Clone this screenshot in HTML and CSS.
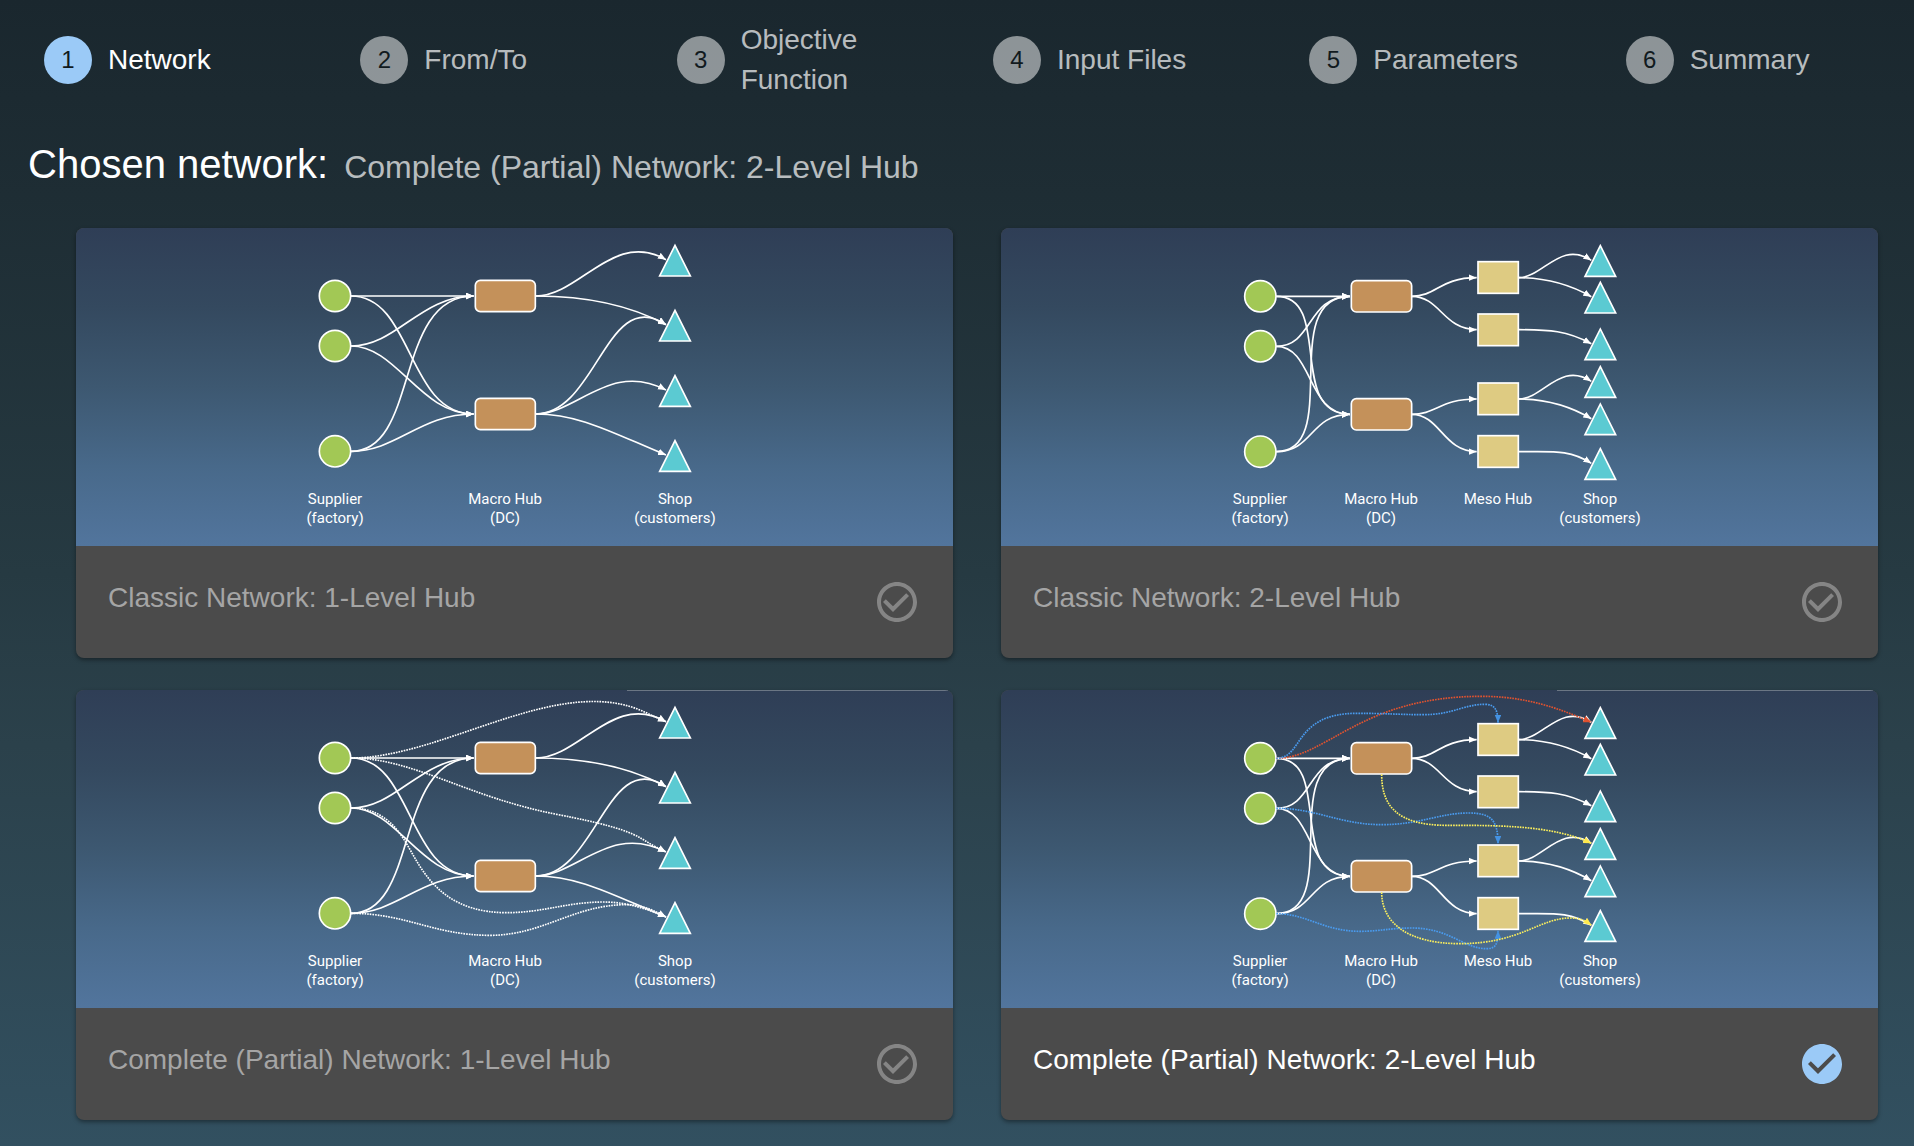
FILE: index.html
```html
<!DOCTYPE html>
<html lang="en">
<head>
<meta charset="utf-8">
<meta name="viewport" content="width=device-width, initial-scale=1">
<title>Network setup</title>
<link rel="stylesheet" href="styles.css">
</head>
<body>
<nav aria-label="Setup steps">
  <ol class="stepper">
    <li class="step step--active" aria-current="step"><span class="step__number">1</span><span class="step__label">Network</span></li>
    <li class="step"><span class="step__number">2</span><span class="step__label">From/To</span></li>
    <li class="step"><span class="step__number">3</span><span class="step__label">Objective Function</span></li>
    <li class="step"><span class="step__number">4</span><span class="step__label">Input Files</span></li>
    <li class="step"><span class="step__number">5</span><span class="step__label">Parameters</span></li>
    <li class="step"><span class="step__number">6</span><span class="step__label">Summary</span></li>
  </ol>
</nav>

<main>
  <h1 class="heading"><span>Chosen network:</span> <span class="heading__value">Complete (Partial) Network: 2-Level Hub</span></h1>

  <div class="networks" role="radiogroup" aria-label="Network">
    <label class="card">
      <svg class="diagram" viewBox="0 0 877 318" aria-hidden="true">
        <defs>
          <marker id="arrow" class="arrow" markerUnits="userSpaceOnUse" markerWidth="26" markerHeight="22" refX="24" refY="10" orient="auto"><path d="M0 0L24 10L0 20Z"/></marker>
          <marker id="arrow-red" class="arrow arrow--red" markerUnits="userSpaceOnUse" markerWidth="26" markerHeight="22" refX="24" refY="10" orient="auto"><path d="M0 0L24 10L0 20Z"/></marker>
          <marker id="arrow-blue" class="arrow arrow--blue" markerUnits="userSpaceOnUse" markerWidth="26" markerHeight="22" refX="24" refY="10" orient="auto"><path d="M0 0L24 10L0 20Z"/></marker>
          <marker id="arrow-yellow" class="arrow arrow--yellow" markerUnits="userSpaceOnUse" markerWidth="26" markerHeight="22" refX="24" refY="10" orient="auto"><path d="M0 0L24 10L0 20Z"/></marker>
          <path id="shop" class="shop" d="M0 0L46 92H-46Z"/>
          <g id="one-level">
            <g class="link">
              <path d="M213 228H581"/>
              <path d="M213 228C400 228 380 582 581 582"/>
              <path d="M213 378C350 378 420 228 581 228"/>
              <path d="M213 378C350 378 420 582 581 582"/>
              <path d="M213 694C420 694 340 228 581 228"/>
              <path d="M213 694C350 694 420 582 581 582"/>
              <path d="M767 228C900 228 1000 28 1158 119"/>
              <path d="M767 228C900 228 1040 250 1158 314"/>
              <path d="M767 582C950 582 980 194 1158 314"/>
              <path d="M767 582C890 582 990 422 1158 510"/>
              <path d="M767 582C900 582 1000 640 1158 705"/>
            </g>
            <g class="supplier"><circle cx="165" cy="228" r="47"/><circle cx="165" cy="378" r="47"/><circle cx="165" cy="694" r="47"/></g>
            <g class="macro"><rect x="586" y="181" width="180" height="94" rx="15"/><rect x="586" y="535" width="180" height="94" rx="15"/></g>
            <use href="#shop" x="1185" y="76"/><use href="#shop" x="1185" y="271"/><use href="#shop" x="1185" y="467"/><use href="#shop" x="1185" y="662"/>
          </g>
          <g id="two-level">
            <g class="link">
              <path d="M229 229H450"/>
              <path d="M229 229C400 229 260 583 450 583"/>
              <path d="M229 379C340 379 320 229 450 229"/>
              <path d="M229 379C340 379 320 583 450 583"/>
              <path d="M229 695C430 695 230 229 450 229"/>
              <path d="M229 695C340 695 330 583 450 583"/>
              <path d="M635 229C710 229 720 173 830 173"/>
              <path d="M635 229C720 229 730 329 830 329"/>
              <path d="M635 583C710 583 720 537 830 537"/>
              <path d="M635 583C720 583 730 695 830 695"/>
              <path d="M955 173C1030 173 1080 60 1174 121"/>
              <path d="M955 173C1030 173 1100 188 1174 230"/>
              <path d="M955 329C1050 329 1100 332 1174 371"/>
              <path d="M955 537C1030 537 1080 423 1174 484"/>
              <path d="M955 537C1030 537 1100 552 1174 596"/>
              <path d="M955 695C1060 695 1110 688 1174 730"/>
            </g>
            <g class="supplier"><circle cx="181" cy="229" r="47"/><circle cx="181" cy="379" r="47"/><circle cx="181" cy="695" r="47"/></g>
            <g class="macro"><rect x="454" y="182" width="181" height="94" rx="15"/><rect x="454" y="536" width="181" height="94" rx="15"/></g>
            <g class="meso"><rect x="834" y="125" width="121" height="95"/><rect x="834" y="282" width="121" height="95"/><rect x="834" y="489" width="121" height="95"/><rect x="834" y="647" width="121" height="95"/></g>
            <use href="#shop" x="1201" y="77"/><use href="#shop" x="1201" y="187"/><use href="#shop" x="1201" y="327"/><use href="#shop" x="1201" y="440"/><use href="#shop" x="1201" y="552"/><use href="#shop" x="1201" y="686"/>
          </g>
        </defs>
        <g transform="translate(204 -8) scale(.33333)"><use href="#one-level"/></g>
        <g class="caption">
          <text x="259" y="276">Supplier</text><text x="259" y="295">(factory)</text>
          <text x="429" y="276">Macro Hub</text><text x="429" y="295">(DC)</text>
          <text x="599" y="276">Shop</text><text x="599" y="295">(customers)</text>
        </g>
      </svg>
      <span class="card__bar">
        <span class="card__title">Classic Network: 1-Level Hub</span>
        <span class="tick">
          <input class="tick__input" type="radio" name="network">
          <svg class="tick__icon tick__icon--off" viewBox="0 0 24 24" aria-hidden="true"><path d="M12 2C6.480 2 2 6.480 2 12s4.480 10 10 10 10-4.480 10-10S17.520 2 12 2zm0 18c-4.410 0-8-3.590-8-8s3.590-8 8-8 8 3.590 8 8-3.590 8-8 8zM16.590 7.580 10 14.170l-3.590-3.580L5 12l5 5 8-8z"/></svg>
          <svg class="tick__icon tick__icon--on" viewBox="0 0 24 24" aria-hidden="true"><path d="M12 2C6.480 2 2 6.480 2 12s4.480 10 10 10 10-4.480 10-10S17.520 2 12 2zm-2 15-5-5 1.410-1.410L10 14.170l7.590-7.590L19 8l-9 9z"/></svg>
        </span>
      </span>
    </label>

    <label class="card">
      <svg class="diagram" viewBox="0 0 877 318" aria-hidden="true">
        <g transform="translate(199 -8) scale(.33333)"><use href="#two-level"/></g>
        <g class="caption">
          <text x="259" y="276">Supplier</text><text x="259" y="295">(factory)</text>
          <text x="380" y="276">Macro Hub</text><text x="380" y="295">(DC)</text>
          <text x="497" y="276">Meso Hub</text>
          <text x="599" y="276">Shop</text><text x="599" y="295">(customers)</text>
        </g>
      </svg>
      <span class="card__bar">
        <span class="card__title">Classic Network: 2-Level Hub</span>
        <span class="tick">
          <input class="tick__input" type="radio" name="network">
          <svg class="tick__icon tick__icon--off" viewBox="0 0 24 24" aria-hidden="true"><path d="M12 2C6.480 2 2 6.480 2 12s4.480 10 10 10 10-4.480 10-10S17.520 2 12 2zm0 18c-4.410 0-8-3.590-8-8s3.590-8 8-8 8 3.590 8 8-3.590 8-8 8zM16.590 7.580 10 14.170l-3.590-3.580L5 12l5 5 8-8z"/></svg>
          <svg class="tick__icon tick__icon--on" viewBox="0 0 24 24" aria-hidden="true"><path d="M12 2C6.480 2 2 6.480 2 12s4.480 10 10 10 10-4.480 10-10S17.520 2 12 2zm-2 15-5-5 1.410-1.410L10 14.170l7.590-7.590L19 8l-9 9z"/></svg>
        </span>
      </span>
    </label>

    <label class="card">
      <svg class="diagram" viewBox="0 0 877 318" aria-hidden="true">
        <path class="edge" d="M551 .5H872"/>
        <g transform="translate(204 -8) scale(.33333)">
          <use href="#one-level"/>
          <g class="link link--dotted">
            <path d="M213 228C500 228 850-40 1110 98L1158 119"/>
            <path d="M213 228C400 228 560 345 830 397S1060 466 1158 510"/>
            <path d="M213 378C330 378 370 470 400 520C450 610 520 692 680 692C790 692 860 660 970 660C1040 660 1100 680 1158 705"/>
            <path d="M213 694C380 694 460 760 630 760C790 760 880 668 1040 668C1090 668 1130 690 1158 705"/>
          </g>
        </g>
        <g class="caption">
          <text x="259" y="276">Supplier</text><text x="259" y="295">(factory)</text>
          <text x="429" y="276">Macro Hub</text><text x="429" y="295">(DC)</text>
          <text x="599" y="276">Shop</text><text x="599" y="295">(customers)</text>
        </g>
      </svg>
      <span class="card__bar">
        <span class="card__title">Complete (Partial) Network: 1-Level Hub</span>
        <span class="tick">
          <input class="tick__input" type="radio" name="network">
          <svg class="tick__icon tick__icon--off" viewBox="0 0 24 24" aria-hidden="true"><path d="M12 2C6.480 2 2 6.480 2 12s4.480 10 10 10 10-4.480 10-10S17.520 2 12 2zm0 18c-4.410 0-8-3.590-8-8s3.590-8 8-8 8 3.590 8 8-3.590 8-8 8zM16.590 7.580 10 14.170l-3.590-3.580L5 12l5 5 8-8z"/></svg>
          <svg class="tick__icon tick__icon--on" viewBox="0 0 24 24" aria-hidden="true"><path d="M12 2C6.480 2 2 6.480 2 12s4.480 10 10 10 10-4.480 10-10S17.520 2 12 2zm-2 15-5-5 1.410-1.410L10 14.170l7.590-7.590L19 8l-9 9z"/></svg>
        </span>
      </span>
    </label>

    <label class="card">
      <svg class="diagram" viewBox="0 0 877 318" aria-hidden="true">
        <path class="edge" d="M556 .5H872"/>
        <g transform="translate(199 -8) scale(.33333)">
          <use href="#two-level"/>
          <g class="link link--dotted">
            <path class="link--red" d="M229 229C380 229 480 43 845 43C980 43 1080 80 1174 121"/>
            <g class="link--blue">
              <path d="M229 229C310 229 280 94 470 94C560 94 600 98 670 98C760 98 790 67 855 67C885 67 894 85 894 122"/>
              <path d="M229 379C350 379 420 428 545 428C660 428 720 393 805 393C870 393 894 410 894 486"/>
              <path d="M229 695C320 695 370 748 480 748C540 748 570 738 635 738C750 738 790 800 860 800C885 800 894 790 894 746"/>
            </g>
            <g class="link--yellow">
              <path d="M545 277C545 370 590 430 740 430C900 430 1060 430 1174 484"/>
              <path d="M545 631C545 720 620 785 780 785C960 785 1020 708 1110 708C1140 708 1155 715 1174 730"/>
            </g>
          </g>
        </g>
        <g class="caption">
          <text x="259" y="276">Supplier</text><text x="259" y="295">(factory)</text>
          <text x="380" y="276">Macro Hub</text><text x="380" y="295">(DC)</text>
          <text x="497" y="276">Meso Hub</text>
          <text x="599" y="276">Shop</text><text x="599" y="295">(customers)</text>
        </g>
      </svg>
      <span class="card__bar">
        <span class="card__title">Complete (Partial) Network: 2-Level Hub</span>
        <span class="tick">
          <input class="tick__input" type="radio" name="network" checked>
          <svg class="tick__icon tick__icon--off" viewBox="0 0 24 24" aria-hidden="true"><path d="M12 2C6.480 2 2 6.480 2 12s4.480 10 10 10 10-4.480 10-10S17.520 2 12 2zm0 18c-4.410 0-8-3.590-8-8s3.590-8 8-8 8 3.590 8 8-3.590 8-8 8zM16.590 7.580 10 14.170l-3.590-3.580L5 12l5 5 8-8z"/></svg>
          <svg class="tick__icon tick__icon--on" viewBox="0 0 24 24" aria-hidden="true"><path d="M12 2C6.480 2 2 6.480 2 12s4.480 10 10 10 10-4.480 10-10S17.520 2 12 2zm-2 15-5-5 1.410-1.410L10 14.170l7.590-7.590L19 8l-9 9z"/></svg>
        </span>
      </span>
    </label>
  </div>
</main>
</body>
</html>
```
FILE: styles.css
```css
*, *::before, *::after {
  box-sizing: border-box;
}

body {
  margin: 0;
  min-height: 100vh;
  color: #fff;
  font-family: "Liberation Sans", Arial, Helvetica, sans-serif;
  font-size: 28px;
  line-height: 40px;
  background: #1a272e linear-gradient(#1a272e, #1e2d34 17%, #263a42 50%, #2b414b 65%, #325060);
}

/* Stepper */
.stepper {
  display: grid;
  grid-template-columns: repeat(6, minmax(0, 1fr));
  gap: 56px;
  margin: 0;
  padding: 20px 28px 0 44px;
  min-height: 100px;
  list-style: none;
}

.step {
  display: flex;
  align-items: center;
  gap: 16px;
  color: rgba(255, 255, 255, .7);
}

.step__number {
  flex: none;
  width: 48px;
  height: 48px;
  border-radius: 50%;
  background: rgba(255, 255, 255, .5);
  color: #111a1e;
  font-size: 24px;
  line-height: 48px;
  text-align: center;
}

.step--active {
  color: #fff;
}

.step--active .step__number {
  background: #9bcaf7;
}

/* Heading */
.heading {
  display: flex;
  flex-wrap: wrap;
  align-items: baseline;
  column-gap: 16px;
  margin: 36px 28px;
  font-size: 40px;
  font-weight: 400;
  line-height: 56px;
}

.heading__value {
  color: rgba(255, 255, 255, .7);
  font-size: 32px;
  line-height: 40px;
}

/* Network cards */
.networks {
  display: grid;
  grid-template-columns: repeat(2, minmax(0, 1fr));
  gap: 32px 48px;
  padding: 0 36px 26px 76px;
}

.card {
  display: flex;
  flex-direction: column;
  overflow: hidden;
  border-radius: 8px;
  background: #4b4b4b;
  box-shadow: 0 2px 4px rgba(0, 0, 0, .4);
  cursor: pointer;
}

.card__bar {
  display: flex;
  align-items: flex-start;
  justify-content: space-between;
  gap: 16px;
  padding: 32px;
}

.card__title {
  color: #a5a5a5;
}

.card:has(:checked) .card__title {
  color: #fff;
}

.tick {
  position: relative;
  flex: none;
  width: 48px;
  height: 48px;
}

.tick__input {
  display: block;
  width: 48px;
  height: 48px;
  margin: 0;
  appearance: none;
  border-radius: 50%;
  cursor: pointer;
}

.tick__icon {
  position: absolute;
  inset: 0;
  fill: #858585;
  pointer-events: none;
}

.tick__icon--on,
.tick__input:checked ~ .tick__icon--off {
  display: none;
}

.tick__input:checked ~ .tick__icon--on {
  display: block;
  fill: #9bcaf7;
}

/* Diagrams */
.diagram {
  display: block;
  width: 100%;
  background: linear-gradient(#2f3e56, #34495f 25%, #3d5871 50%, #48698a 75%, #52759d);
}

.edge {
  stroke: #6b7684;
}

.link {
  fill: none;
  stroke: #fff;
  stroke-width: 5;
}

.link path {
  marker-end: url(#arrow);
}

.link--dotted {
  stroke-dasharray: 5 3;
}

.link .link--red {
  stroke: #e2532f;
  marker-end: url(#arrow-red);
}

.link--blue {
  stroke: #4a9bee;
}

.link .link--blue path {
  marker-end: url(#arrow-blue);
}

.link--yellow {
  stroke: #fbee5c;
}

.link .link--yellow path {
  marker-end: url(#arrow-yellow);
}

.arrow {
  fill: #fff;
  stroke: none;
}

.arrow path {
  marker-end: none;
}

.arrow--red {
  fill: #e0512f;
}

.arrow--blue {
  fill: #4492e2;
}

.arrow--yellow {
  fill: #ffe94d;
}

.supplier,
.macro,
.meso,
.shop {
  stroke: #fff;
  stroke-width: 5;
}

.supplier {
  fill: #a2c855;
}

.macro {
  fill: #c4915a;
}

.meso {
  fill: #decb82;
}

.shop {
  fill: #5bcad2;
}

.caption {
  fill: #fff;
  font-family: Roboto, sans-serif;
  font-size: 15px;
  text-anchor: middle;
}
```
